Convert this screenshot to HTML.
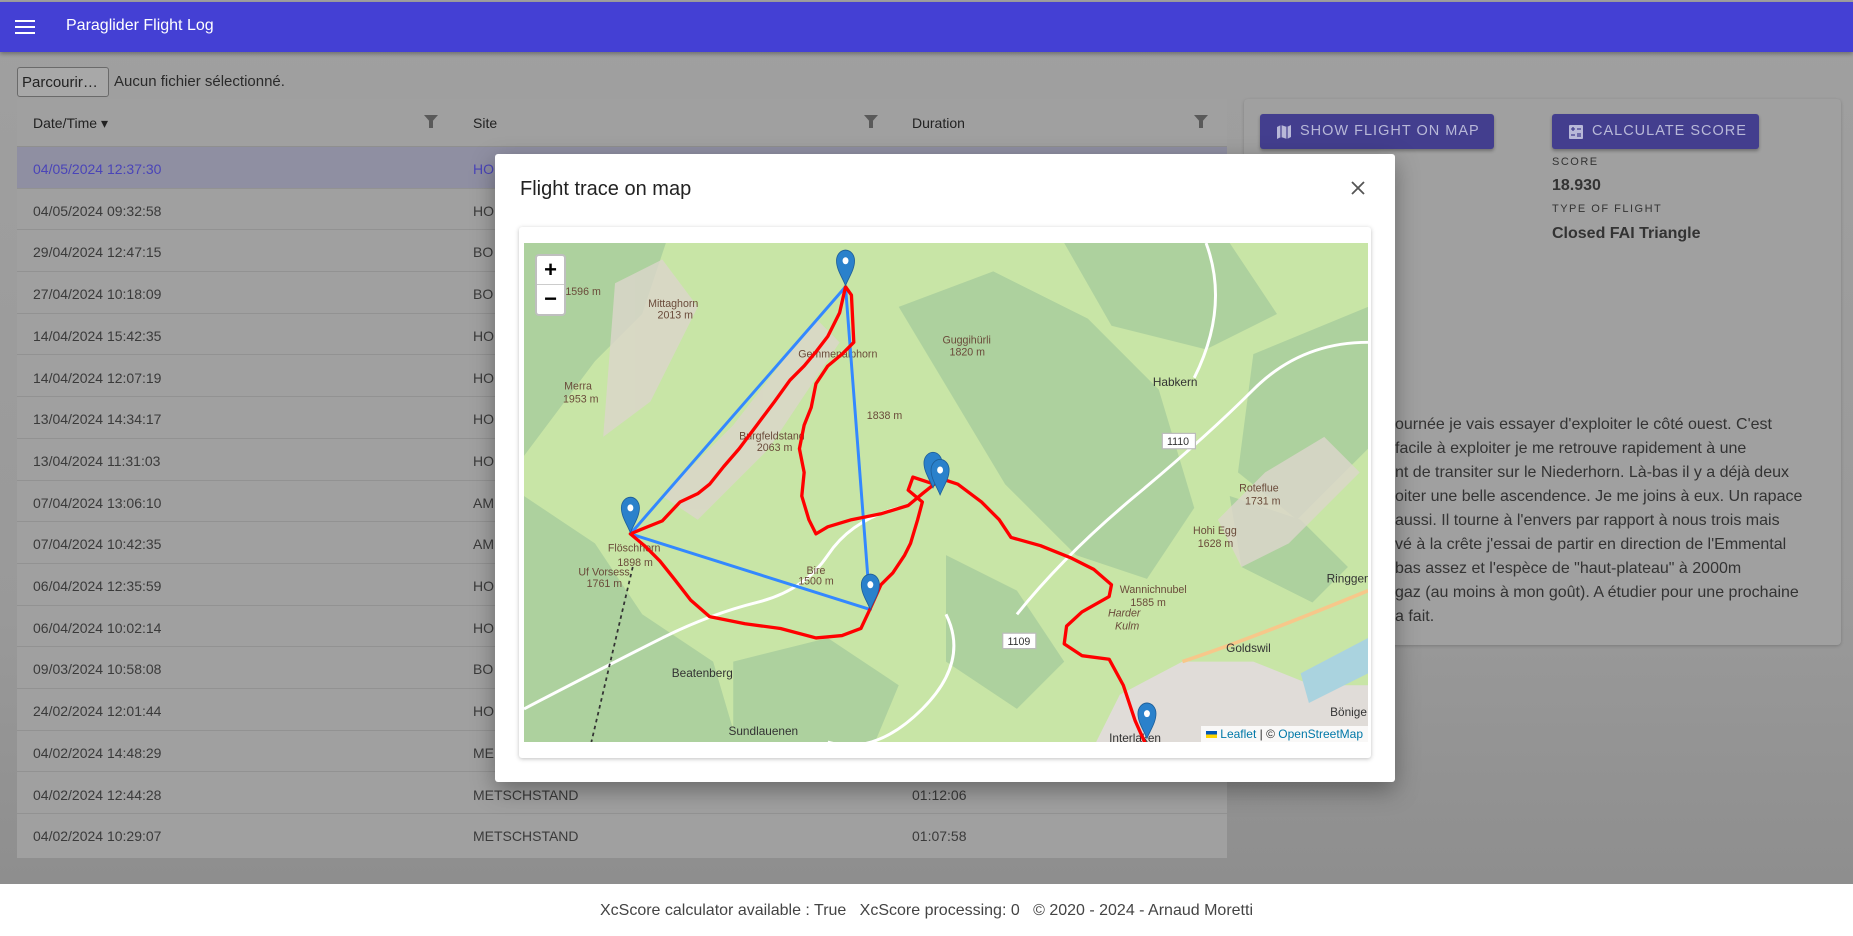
<!DOCTYPE html>
<html><head><meta charset="utf-8">
<style>
*{box-sizing:border-box;margin:0;padding:0}
body{width:1853px;height:936px;overflow:hidden;font-family:"Liberation Sans",sans-serif;position:relative;background:#fff}
.bg{position:absolute;left:0;top:0;width:1853px;height:884px;background:linear-gradient(180deg,#a0a0a0 0%,#9c9c9c 40%,#999 70%,#8e8e8e 100%)}
.hdr{position:absolute;left:0;top:2px;width:1853px;height:50px;background:#4440d4;color:#fff;box-shadow:0 2px 4px rgba(0,0,0,.3)}
.hdr .t{position:absolute;left:66px;top:15px;font-size:16px}
.burger{position:absolute;left:15px;top:18px;width:20px}
.burger i{display:block;height:2px;background:#fff;margin-bottom:4px}
.btnf{position:absolute;left:17px;top:67px;width:92px;height:30px;border:1px solid #6a6a6a;border-radius:3px;background:#a8a8a8;font-size:15px;color:#222;padding:6px 4px}
.nof{position:absolute;left:114px;top:73px;font-size:15px;color:#2a2a2a}
.tbl{position:absolute;left:17px;top:99px;width:1210px;height:759px;background:#a0a0a0}
.th{position:absolute;left:0;top:0;width:1210px;height:48px;border-bottom:1px solid #8f8f8f;font-size:14px;color:#222}
.row{position:absolute;left:0;width:1210px;height:41.7px;border-bottom:1px solid #929292;font-size:14px;color:#3a3a3a}
.row span,.th span{position:absolute;top:14px}
.c1{left:16px}.c2{left:456px}.c3{left:895px}
.filt{position:absolute;top:16px;width:0;height:0;border-left:7px solid transparent;border-right:7px solid transparent;border-top:8px solid #5a5a5a}
.filt:after{content:"";position:absolute;left:-2px;top:-2px;width:4px;height:7px;background:#5a5a5a}
.card{position:absolute;left:1244px;top:99px;width:597px;height:546px;background:#a0a0a0;border-radius:4px;box-shadow:0 1px 3px rgba(0,0,0,.2)}
.pb{position:absolute;top:15px;height:35px;background:#433e8e;border-radius:3px;color:#b8b8d8;font-size:14.5px;letter-spacing:1px;padding:9px 0 0 40px;white-space:nowrap;box-shadow:0 2px 3px rgba(0,0,0,.3)}
.lab{position:absolute;font-size:11px;letter-spacing:1.5px;color:#333}
.val{position:absolute;font-size:16px;font-weight:bold;color:#333}
.desc{position:absolute;left:1395px;font-size:16px;color:#333;white-space:nowrap}
.modal{position:absolute;left:495px;top:154px;width:900px;height:628px;background:#fff;border-radius:3px;box-shadow:0 8px 24px rgba(0,0,0,.35)}
.mt{position:absolute;left:25px;top:24px;font-size:20px;color:#222}
.close{position:absolute;left:855px;top:26px}
.mcard{position:absolute;left:24px;top:73px;width:852px;height:531px;background:#fff;box-shadow:0 1px 4px rgba(0,0,0,.25);border-radius:3px}
.map{position:absolute;left:5px;top:16px;width:844px;height:499px;overflow:hidden;background:#c8e5a6}
.zoom{position:absolute;left:11px;top:11px;width:31px;height:62px;background:#fff;border:2px solid rgba(0,0,0,.25);border-radius:4px;font-size:22px;font-weight:bold;text-align:center;line-height:28px;color:#000}
.attr{position:absolute;right:0;bottom:0;background:rgba(255,255,255,.8);font-size:12px;padding:1px 5px;color:#333}
.attr a{color:#0078a8;text-decoration:none}
.foot{position:absolute;left:0;top:884px;width:1853px;height:52px;text-align:center;font-size:16px;color:#444;padding-top:18px}
</style></head><body>
<div class="bg"></div>
<div class="hdr"><div class="burger"><i></i><i></i><i></i></div><div class="t">Paraglider Flight Log</div></div>
<div class="btnf">Parcourir…</div><div class="nof">Aucun fichier sélectionné.</div>

<div class="tbl">
<div class="th"><span class="c1" style="top:16px">Date/Time ▾</span><div class="filt" style="left:407px"></div><span class="c2" style="top:16px">Site</span><div class="filt" style="left:847px"></div><span class="c3" style="top:16px">Duration</span><div class="filt" style="left:1177px"></div></div>
<div class="row" style="top:48px;background:#8f8fa2;color:#4a44b8"><span class="c1">04/05/2024 12:37:30</span><span class="c2">HO</span></div>
<div class="row" style="top:89.7px"><span class="c1">04/05/2024 09:32:58</span><span class="c2">HO</span></div>
<div class="row" style="top:131.4px"><span class="c1">29/04/2024 12:47:15</span><span class="c2">BO</span></div>
<div class="row" style="top:173.1px"><span class="c1">27/04/2024 10:18:09</span><span class="c2">BO</span></div>
<div class="row" style="top:214.8px"><span class="c1">14/04/2024 15:42:35</span><span class="c2">HO</span></div>
<div class="row" style="top:256.5px"><span class="c1">14/04/2024 12:07:19</span><span class="c2">HO</span></div>
<div class="row" style="top:298.2px"><span class="c1">13/04/2024 14:34:17</span><span class="c2">HO</span></div>
<div class="row" style="top:339.9px"><span class="c1">13/04/2024 11:31:03</span><span class="c2">HO</span></div>
<div class="row" style="top:381.6px"><span class="c1">07/04/2024 13:06:10</span><span class="c2">AM</span></div>
<div class="row" style="top:423.3px"><span class="c1">07/04/2024 10:42:35</span><span class="c2">AM</span></div>
<div class="row" style="top:465px"><span class="c1">06/04/2024 12:35:59</span><span class="c2">HO</span></div>
<div class="row" style="top:506.7px"><span class="c1">06/04/2024 10:02:14</span><span class="c2">HO</span></div>
<div class="row" style="top:548.4px"><span class="c1">09/03/2024 10:58:08</span><span class="c2">BO</span></div>
<div class="row" style="top:590.1px"><span class="c1">24/02/2024 12:01:44</span><span class="c2">HO</span></div>
<div class="row" style="top:631.8px"><span class="c1">04/02/2024 14:48:29</span><span class="c2">ME</span></div>
<div class="row" style="top:673.5px"><span class="c1">04/02/2024 12:44:28</span><span class="c2">METSCHSTAND</span><span class="c3">01:12:06</span></div>
<div class="row" style="top:715.2px;border-bottom:none"><span class="c1">04/02/2024 10:29:07</span><span class="c2">METSCHSTAND</span><span class="c3">01:07:58</span></div>
</div>

<div class="card">
<div class="pb" style="left:16px;width:234px"><svg style="position:absolute;left:16px;top:10px" width="16" height="16" viewBox="0 0 16 16"><path d="M1 3l4-2 6 2 4-2v12l-4 2-6-2-4 2z" fill="#b8b8d8"/><path d="M5 1v12M11 3v12" stroke="#433e8e" stroke-width="1.2"/></svg>SHOW FLIGHT ON MAP</div>
<div class="pb" style="left:308px;width:207px"><svg style="position:absolute;left:16px;top:10px" width="16" height="16" viewBox="0 0 16 16"><rect x="1" y="1" width="14" height="14" rx="1" fill="#b8b8d8"/><path d="M3 5h4M5 3v4M9 5h4M3 11h4M9 10h4M9 12h4" stroke="#433e8e" stroke-width="1.3"/></svg>CALCULATE SCORE</div>
<div class="lab" style="left:308px;top:57px">SCORE</div>
<div class="val" style="left:308px;top:78px">18.930</div>
<div class="lab" style="left:308px;top:104px">TYPE OF FLIGHT</div>
<div class="val" style="left:308px;top:126px">Closed FAI Triangle</div>
</div>
<div class="desc" style="top:416px">ournée je vais essayer d'exploiter le côté ouest. C'est</div>
<div class="desc" style="top:440px">facile à exploiter je me retrouve rapidement à une</div>
<div class="desc" style="top:464px">nt de transiter sur le Niederhorn. Là-bas il y a déjà deux</div>
<div class="desc" style="top:488px">oiter une belle ascendence. Je me joins à eux. Un rapace</div>
<div class="desc" style="top:512px"> aussi. Il tourne à l'envers par rapport à nous trois mais</div>
<div class="desc" style="top:536px">vé à la crête j'essai de partir en direction de l'Emmental</div>
<div class="desc" style="top:560px">bas assez et l'espèce de "haut-plateau" à 2000m</div>
<div class="desc" style="top:584px">gaz (au moins à mon goût). A étudier pour une prochaine</div>
<div class="desc" style="top:608px">a fait.</div>

<div class="modal">
<div class="mt">Flight trace on map</div>
<svg class="close" width="16" height="16" viewBox="0 0 16 16"><path d="M2 2L14 14M14 2L2 14" stroke="#555" stroke-width="1.8"/></svg>
<div class="mcard">
<div class="map">
<svg width="844" height="499" viewBox="443 206 714 422" preserveAspectRatio="none" style="position:absolute;left:0;top:0">
<rect x="443" y="206" width="714" height="422" fill="#c8e5a6"/>
<g fill="#add19e">
<path d="M443 206h120l-20 60-40 40-60 80z"/>
<path d="M443 420l60 40 40 60 60 40 20 68h-180z"/>
<path d="M760 260l80-30 80 40 60 60 30 100-40 60-60-20-60-60z"/>
<path d="M900 206h140l40 60-60 30-80-20z"/>
<path d="M1060 300l97-40v120l-60 60-50-40z"/>
<path d="M800 470l60 30 40 60-40 40-60-40z"/>
<path d="M620 560l80-20 60 40-20 48h-120z"/>
<path d="M1040 420l60 20 40 40-30 30-60-30z"/>
</g>
<g fill="#dcd6cc" opacity=".8">
<path d="M520 240l40-20 30 40-40 80-40 30z"/>
<path d="M560 420l60-60 70-90 20 20-60 90-60 60z"/>
<path d="M1030 440l40-40 50-30 30 30-60 60-40 20z"/>
</g>
<g fill="#e0dcd8">
<path d="M1000 560l60 0 50 20 47 0v48h-230l20-40z"/>
</g>
<path d="M1100 570l57-30v30l-50 25z" fill="#aad3df"/>
<path d="M1000 560 Q1060 540 1157 500" stroke="#f7c78a" stroke-width="3" fill="none"/>
<g stroke="#fff" stroke-width="2.5" fill="none">
<path d="M443 600 Q520 560 560 540 T640 510 700 470 760 430"/>
<path d="M800 520 Q820 560 780 600 T700 628"/>
<path d="M860 520 Q900 470 960 420 T1060 330 1157 290"/>
<path d="M1020 206 Q1040 260 1010 320"/>
</g>
<path d="M535 480 L500 628" stroke="#333" stroke-width="1.5" stroke-dasharray="3 3" fill="none"/>
<g font-size="9" fill="#6a4b3a" font-family="Liberation Sans">
<text x="548" y="260">Mittaghorn</text><text x="556" y="270">2013 m</text>
<text x="478" y="250">1596 m</text>
<text x="477" y="330">Merra</text><text x="476" y="341">1953 m</text>
<text x="675" y="303">Gemmenalphorn</text>
<text x="797" y="291">Guggihürli</text><text x="803" y="301">1820 m</text>
<text x="733" y="355">1838 m</text>
<text x="625" y="372">Burgfeldstand</text><text x="640" y="382">2063 m</text>
<text x="514" y="467">Flöschhorn</text><text x="522" y="479">1898 m</text>
<text x="489" y="487">Uf Vorsess</text><text x="496" y="497">1761 m</text>
<text x="682" y="486">Bire</text><text x="675" y="495">1500 m</text>
<text x="1048" y="416">Roteflue</text><text x="1053" y="427">1731 m</text>
<text x="1009" y="452">Hohi Egg</text><text x="1013" y="463">1628 m</text>
<text x="947" y="502">Wannichnubel</text><text x="956" y="513">1585 m</text>
<text x="937" y="522" font-style="italic">Harder</text><text x="943" y="533" font-style="italic">Kulm</text>
</g>
<g font-size="10" fill="#333" font-family="Liberation Sans">
<text x="975" y="327">Habkern</text><text x="568" y="573">Beatenberg</text><text x="616" y="622">Sundlauenen</text>
<text x="1037" y="552">Goldswil</text><text x="1122" y="493">Ringgen</text><text x="1125" y="606">Bönige</text><text x="938" y="628">Interlaken</text>
</g>
<rect x="983" y="367" width="28" height="13" fill="#fff" stroke="#bbb"/><text x="987" y="377" font-size="9" fill="#333">1110</text>
<rect x="848" y="536" width="28" height="13" fill="#fff" stroke="#bbb"/><text x="852" y="546" font-size="9" fill="#333">1109</text>
<g fill="none" stroke-linejoin="round" stroke-linecap="round">
<path d="M715 243 L533 452 L736 516 Z" stroke="#3388ff" stroke-width="2.5"/>
<path d="M533 452 L545 447 L560 441 L575 425 L590 418 L600 410 L612 395 L625 380 L640 360 L655 340 L668 322 L680 310 L690 298 L700 285 L710 265 L715 243 L720 250 L722 290 L712 300 L700 310 L690 325 L686 345 L680 360 L676 380 L680 400 L678 420 L684 440 L690 452 L700 446 L720 440 L745 435 L768 428 L780 418 L790 410 L772 404 L768 415 L780 425 L776 440 L770 460 L765 470 L755 485 L745 495 L736 515 L728 532 L712 538 L690 540 L660 532 L630 528 L600 522 L584 508 L570 490 L558 475 L545 462 L533 452" stroke="#ff0000" stroke-width="2.8"/>
<path d="M795 405 L810 410 L830 425 L845 440 L855 455 L880 462 L905 472 L925 482 L940 495 L938 505 L915 518 L902 530 L900 545 L915 555 L938 558 L950 580 L960 610 L968 628" stroke="#ff0000" stroke-width="2.8"/>
</g>
<g fill="#2a81cb" stroke="#1e5f99" stroke-width=".8">
<path transform="translate(715,242) scale(.85,1)" d="M0 0 C-4 -8 -9 -14 -9 -21 A9 9 0 0 1 9 -21 C9 -14 4 -8 0 0Z"/>
<path transform="translate(533,451) scale(.85,1)" d="M0 0 C-4 -8 -9 -14 -9 -21 A9 9 0 0 1 9 -21 C9 -14 4 -8 0 0Z"/>
<path transform="translate(736,516) scale(.85,1)" d="M0 0 C-4 -8 -9 -14 -9 -21 A9 9 0 0 1 9 -21 C9 -14 4 -8 0 0Z"/>
<path transform="translate(789,413) scale(.85,1)" d="M0 0 C-4 -8 -9 -14 -9 -21 A9 9 0 0 1 9 -21 C9 -14 4 -8 0 0Z"/>
<path transform="translate(795,419) scale(.85,1)" d="M0 0 C-4 -8 -9 -14 -9 -21 A9 9 0 0 1 9 -21 C9 -14 4 -8 0 0Z"/>
<path transform="translate(970,625) scale(.85,1)" d="M0 0 C-4 -8 -9 -14 -9 -21 A9 9 0 0 1 9 -21 C9 -14 4 -8 0 0Z"/>
</g>
<g fill="#fff">
<ellipse cx="715" cy="221" rx="2.5" ry="3"/><ellipse cx="533" cy="430" rx="2.5" ry="3"/><ellipse cx="736" cy="495" rx="2.5" ry="3"/><ellipse cx="795" cy="398" rx="2.5" ry="3"/><ellipse cx="970" cy="604" rx="2.5" ry="3"/>
</g>
</svg>
<div class="zoom">+<div style="border-top:1px solid #ccc;line-height:28px">−</div></div>
<div class="attr"><span style="display:inline-block;width:11px;height:7px;background:linear-gradient(#0057b7 50%,#ffd500 50%)"></span> <a>Leaflet</a> | © <a>OpenStreetMap</a></div>
</div>
</div>
</div>

<div class="foot">XcScore calculator available : True &nbsp; XcScore processing: 0 &nbsp; © 2020 - 2024 - Arnaud Moretti</div>
</body></html>
